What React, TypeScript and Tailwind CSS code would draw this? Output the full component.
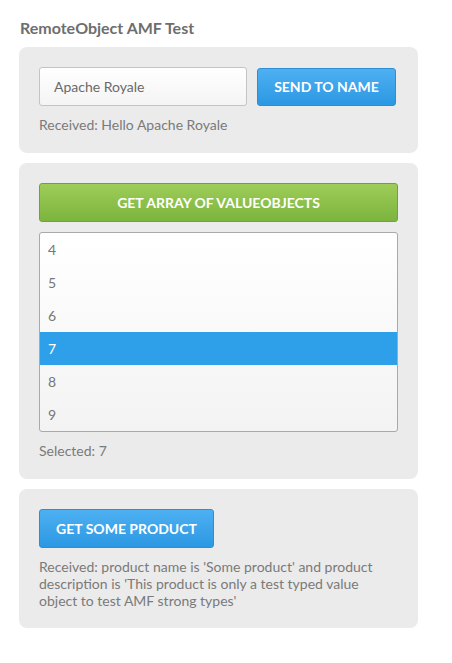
import { useState } from "react";

const items = ["4", "5", "6", "7", "8", "9"];

export default function App() {
  const [name, setName] = useState("Apache Royale");
  const [selected, setSelected] = useState("7");

  return (
    <div className="min-h-[663px] bg-white font-['Lato','Open_Sans',sans-serif] text-[14px] text-[#7a7a7a]">
      <div className="w-[418px] pl-[19px] pt-[18px]">
        <h1 className="pl-[1px] text-[16px] leading-[20px] font-bold text-[#6e6e6e]">RemoteObject AMF Test</h1>

        {/* name */}
        <div className="mt-[9px] rounded-[8px] bg-[#ebebeb] px-[20px] pt-[20px] pb-[19px]">
          <div className="flex items-center gap-[10px]">
            <input
              value={name}
              onChange={(e) => setName(e.target.value)}
              className="h-[39px] w-[208px] rounded-[3px] border border-[#c4c4c4] bg-gradient-to-b from-white to-[#f4f4f4] px-[14px] text-[14px] text-[#6a6a6a] outline-none"
            />
            <button className="h-[38px] w-[139px] rounded-[3px] border border-[#2c8fd6] bg-gradient-to-b from-[#4db0f2] to-[#2b98e3] text-[14px] font-bold text-white">
              SEND TO NAME
            </button>
          </div>
          <p className="mt-[10px] leading-[18px]">Received: Hello {name}</p>
        </div>

        {/* array */}
        <div className="mt-[10px] rounded-[8px] bg-[#ebebeb] px-[20px] pt-[20px] pb-[19px]">
          <button className="h-[39px] w-full rounded-[3px] border border-[#6fa434] bg-gradient-to-b from-[#9dcd58] to-[#7cb43d] text-[14px] font-bold text-white">
            GET ARRAY OF VALUEOBJECTS
          </button>
          <ul className="mt-[10px] overflow-hidden rounded-[3px] border border-[#a9a9a9] bg-gradient-to-b from-white to-[#f3f3f3]">
            {items.map((it) => (
              <li
                key={it}
                onClick={() => setSelected(it)}
                className={`flex h-[33px] cursor-pointer items-center pl-[8px] ${
                  selected === it ? "bg-[#2ea0e9] text-white" : "text-[#777]"
                }`}
              >
                {it}
              </li>
            ))}
          </ul>
          <p className="mt-[10px] leading-[18px]">Selected: {selected}</p>
        </div>

        {/* product */}
        <div className="mt-[10px] rounded-[8px] bg-[#ebebeb] px-[20px] pt-[20px] pb-[19px]">
          <button className="h-[39px] w-[175px] rounded-[3px] border border-[#2c8fd6] bg-gradient-to-b from-[#4db0f2] to-[#2b98e3] text-[14px] font-bold text-white">
            GET SOME PRODUCT
          </button>
          <p className="mt-[10px] leading-[17px]">
            Received: product name is 'Some product' and product description is 'This product is only a test typed value
            object to test AMF strong types'
          </p>
        </div>
      </div>
    </div>
  );
}
